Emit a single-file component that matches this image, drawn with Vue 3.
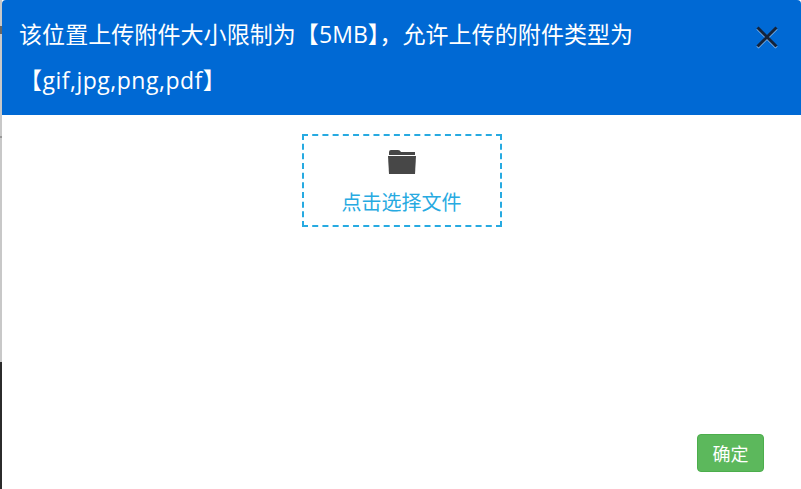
<script setup>
const sizeText = '该位置上传附件大小限制为【5MB】，允许上传的附件类型为'
const typeText = '【gif,jpg,png,pdf】'
</script>

<template>
  <div class="backdrop">
    <div class="modal">
      <div class="modal-header">
        <h4 class="modal-title">
          <span class="line-size">{{ sizeText }}</span>
          <span class="line-type">{{ typeText }}</span>
        </h4>
        <button class="close" aria-label="关闭">
          <svg width="24" height="24" viewBox="0 0 24 24">
            <path d="M2.5 2.5 L21.5 21.5 M21.5 2.5 L2.5 21.5" />
          </svg>
        </button>
      </div>
      <div class="modal-body">
        <div class="picker">
          <svg class="folder" width="30" height="28" viewBox="0 0 30 28">
            <path d="M2 4 Q2 2 4 2 H11 Q13 2 14 4 H28 V7 H2 Z" />
            <path d="M1 8 H29 L28 26 H2 Z" />
          </svg>
          <span class="picker-text">点击选择文件</span>
        </div>
      </div>
      <div class="modal-footer">
        <button class="btn-ok">确定</button>
      </div>
    </div>
  </div>
</template>

<style>
html, body { margin: 0; height: 100%; overflow: hidden; }
#app { height: 100%; }
</style>

<style scoped>
.backdrop {
  height: 100vh;
  background: #fff linear-gradient(#c8c8c8 0 26px, #666 26px 34px, #c8c8c8 34px 136px, #999 136px 138px, #c8c8c8 138px 362px, #2b2b2b 362px) no-repeat left top / 2px 100%;
  padding-left: 2px;
  box-sizing: border-box;
  font-family: "Open Sans", "Noto Sans CJK SC", sans-serif;
}
.modal {
  height: 100%;
  background: #fff;
  display: flex;
  flex-direction: column;
}
.modal-header {
  height: 115px;
  box-sizing: border-box;
  background: #0069d4;
  border-radius: 4px 4px 0 0;
  padding: 11px 20px 0 17px;
  display: flex;
  align-items: flex-start;
  justify-content: space-between;
}
.modal-title {
  margin: 0;
  width: 660px;
  color: #fff;
  font-size: 23px;
  font-weight: 400;
  line-height: 46px;
}
.line-size { display: block; letter-spacing: .07px; }
.line-type { display: block; letter-spacing: .5px; }
.close {
  margin: 14px 2px 0 0;
  padding: 0;
  border: 0;
  background: none;
  width: 24px;
  height: 24px;
  filter: drop-shadow(0 1px 0 rgba(255, 255, 255, .55));
}
.close svg { display: block; }
.close path { stroke: #14233a; stroke-width: 3; fill: none; }
.modal-body {
  flex: 1;
  padding-top: 19px;
  display: flex;
  justify-content: center;
}
.picker {
  width: 200px;
  height: 93px;
  box-sizing: border-box;
  border: 2px dashed #27aae1;
  display: flex;
  flex-direction: column;
  align-items: center;
  padding-top: 12px;
}
.folder { display: block; fill: #474747; }
.picker-text {
  margin-top: 13px;
  color: #27aae1;
  font-size: 20px;
  line-height: 28px;
}
.modal-footer {
  display: flex;
  justify-content: flex-end;
  padding: 0 37px 17px 0;
}
.btn-ok {
  width: 67px;
  height: 38px;
  padding: 0;
  color: #fff;
  background: #5cb85c;
  border: 1px solid #4cae4c;
  border-radius: 4px;
  font-family: inherit;
  font-size: 18px;
}
</style>
